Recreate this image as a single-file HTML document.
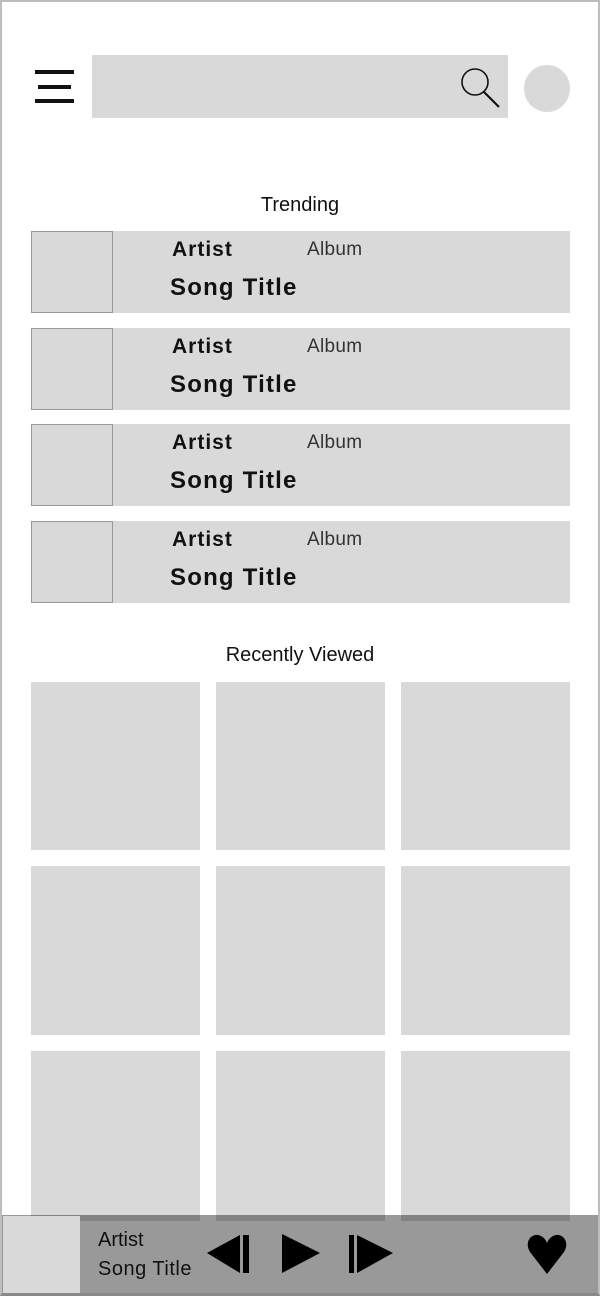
<!DOCTYPE html>
<html><head><meta charset="utf-8"><style>
*{margin:0;padding:0;box-sizing:border-box}
body{width:600px;height:1296px;background:#fff;position:relative;overflow:hidden;font-family:"Liberation Sans",sans-serif;color:#111}
.frame{position:absolute;left:0;top:0;width:600px;height:1296px;border:2px solid #bdbdbd;border-bottom:3px solid #888}
.a{position:absolute}
.g{background:#d9d9d9}
.row{position:absolute;left:31px;width:539px;height:82px;background:#d9d9d9}
.row .th{position:absolute;left:0;top:0;width:82px;height:82px;border:1px solid #999}
.row .ar{position:absolute;left:141px;top:7px;font-weight:bold;font-size:21px;letter-spacing:1px}
.row .al{position:absolute;left:276px;top:8px;font-size:19px;color:#333;letter-spacing:0.3px}
.row .st{position:absolute;left:139px;top:43px;font-weight:bold;font-size:24px;letter-spacing:1.2px}
.h{position:absolute;width:100%;text-align:center;font-size:20px}
</style></head><body>
<div class="a" style="left:35px;top:70px;width:39px;height:4px;background:#111"></div>
<div class="a" style="left:38px;top:85px;width:33px;height:4px;background:#111"></div>
<div class="a" style="left:35px;top:99px;width:39px;height:4px;background:#111"></div>
<div class="a g" style="left:92px;top:55px;width:416px;height:63px"></div>
<svg class="a" style="left:450px;top:62px" width="60" height="50"><circle cx="25" cy="20" r="13" fill="none" stroke="#111" stroke-width="1.6"/><line x1="34" y1="30" x2="49" y2="45" stroke="#111" stroke-width="2.2"/></svg>
<div class="a g" style="left:524px;top:65px;width:46px;height:47px;border-radius:50%"></div>
<div class="h" style="top:194px">Trending</div>
<div class="row" style="top:231px"><div class="th"></div><div class="ar">Artist</div><div class="al">Album</div><div class="st">Song Title</div></div>
<div class="row" style="top:328px"><div class="th"></div><div class="ar">Artist</div><div class="al">Album</div><div class="st">Song Title</div></div>
<div class="row" style="top:424px"><div class="th"></div><div class="ar">Artist</div><div class="al">Album</div><div class="st">Song Title</div></div>
<div class="row" style="top:521px"><div class="th"></div><div class="ar">Artist</div><div class="al">Album</div><div class="st">Song Title</div></div>
<div class="h" style="top:644px">Recently Viewed</div>
<div class="a g" style="left:31px;top:682px;width:169px;height:168px"></div>
<div class="a g" style="left:216px;top:682px;width:169px;height:168px"></div>
<div class="a g" style="left:401px;top:682px;width:169px;height:168px"></div>
<div class="a g" style="left:31px;top:866px;width:169px;height:169px"></div>
<div class="a g" style="left:216px;top:866px;width:169px;height:169px"></div>
<div class="a g" style="left:401px;top:866px;width:169px;height:169px"></div>
<div class="a g" style="left:31px;top:1051px;width:169px;height:170px"></div>
<div class="a g" style="left:216px;top:1051px;width:169px;height:170px"></div>
<div class="a g" style="left:401px;top:1051px;width:169px;height:170px"></div>
<div class="a" style="left:0;top:1215px;width:600px;height:81px;background:rgba(0,0,0,0.4)"></div>
<div class="a g" style="left:3px;top:1216px;width:77px;height:78px"></div>
<div class="a" style="left:98px;top:1229px;font-size:20px;color:#111">Artist</div>
<div class="a" style="left:98px;top:1258px;font-size:20px;color:#111;letter-spacing:0.5px">Song Title</div>
<svg class="a" style="left:200px;top:1228px" width="200" height="52">
<polygon points="7,25 40,7 40,45" fill="#000"/><rect x="43" y="7" width="6" height="38" fill="#000"/>
<polygon points="82,6 120,25 82,45" fill="#000"/>
<rect x="149" y="7" width="5" height="38" fill="#000"/><polygon points="157,7 193,25 157,45" fill="#000"/>
</svg>
<svg class="a" style="left:525px;top:1232px" width="44" height="44"><path d="M22 42 L5 20 C-1 10 6 2 13 3 C18 4 21 8 22 11 C23 8 26 4 31 3 C38 2 45 10 39 20 Z" fill="#000"/></svg>
<div class="frame"></div>
</body></html>
